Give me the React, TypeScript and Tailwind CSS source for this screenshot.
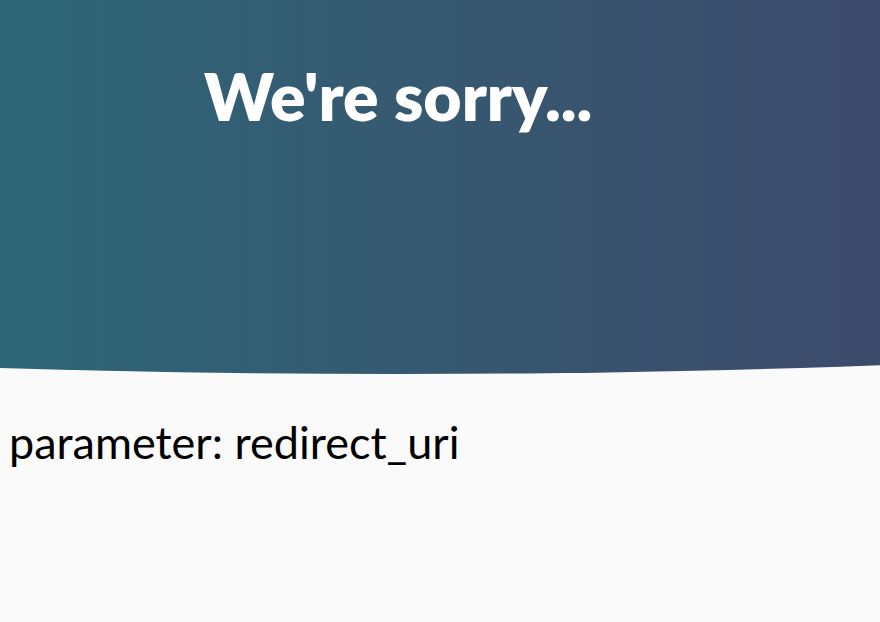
const App = () => {
  return (
    <div className="min-h-screen w-full bg-[#fafafa] font-['Lato','Noto_Sans',sans-serif]">
      <header className="h-[374px] w-full bg-linear-to-r from-[#2c6677] to-[#3c4a6b] [clip-path:ellipse(3000px_675px_at_400px_-301px)]">
        <div className="pl-[204px] pt-[56px]">
          <h1 className="text-[66px] leading-[80px] font-extrabold text-white">We're sorry...</h1>
        </div>
      </header>
      <main className="pl-[9px] pt-[43px]">
        <p className="text-[45px] leading-[50px] text-black">parameter: redirect_uri</p>
      </main>
    </div>
  );
};

export default App;
